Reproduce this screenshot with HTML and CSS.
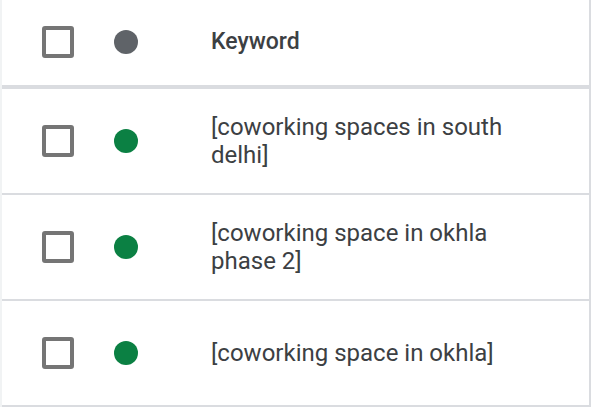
FILE: index.html
```html
<!DOCTYPE html>
<html lang="en">
<head>
<meta charset="utf-8">
<link rel="stylesheet" href="styles.css">
</head>
<body>
<div class="table">
  <div class="row head">
    <span class="checkbox"></span>
    <span class="dot dot-gray"></span>
    <span class="cell head-label">Keyword</span>
  </div>
  <div class="row">
    <span class="checkbox"></span>
    <span class="dot dot-green"></span>
    <span class="cell">[coworking spaces in south delhi]</span>
  </div>
  <div class="row">
    <span class="checkbox"></span>
    <span class="dot dot-green"></span>
    <span class="cell">[coworking space in okhla phase 2]</span>
  </div>
  <div class="row">
    <span class="checkbox"></span>
    <span class="dot dot-green"></span>
    <span class="cell">[coworking space in okhla]</span>
  </div>
</div>
</body>
</html>
```

FILE: styles.css
```css
html, body {
  margin: 0;
  padding: 0;
  background: #ffffff;
}

body {
  font-family: Roboto, "Liberation Sans", Arial, sans-serif;
  color: #3c4043;
}

.table {
  width: 591px;
  box-sizing: border-box;
  border-left: 2px solid #f1f3f4;
  border-right: 2px solid #dadce0;
}

.row {
  display: grid;
  grid-template-columns: 32px 24px 1fr;
  column-gap: 40px;
  align-items: center;
  min-height: 106px;
  padding-left: 40px;
  padding-right: 58px;
  border-bottom: 2px solid #dadce0;
  box-sizing: border-box;
}

.row.head {
  min-height: 89px;
  height: 89px;
  border-bottom-width: 4px;
  padding-bottom: 2px;
}

.checkbox {
  width: 32px;
  height: 32px;
  box-sizing: border-box;
  border: 4px solid #757575;
  border-radius: 3px;
}

.dot {
  width: 24px;
  height: 24px;
  border-radius: 50%;
}

.dot-gray {
  background: #5f6368;
}

.dot-green {
  background: #0b8043;
}

.cell {
  margin-left: 33px;
  font-size: 24px;
  line-height: 28px;
}

.head-label {
  font-size: 23px;
  font-weight: 500;
}
```
